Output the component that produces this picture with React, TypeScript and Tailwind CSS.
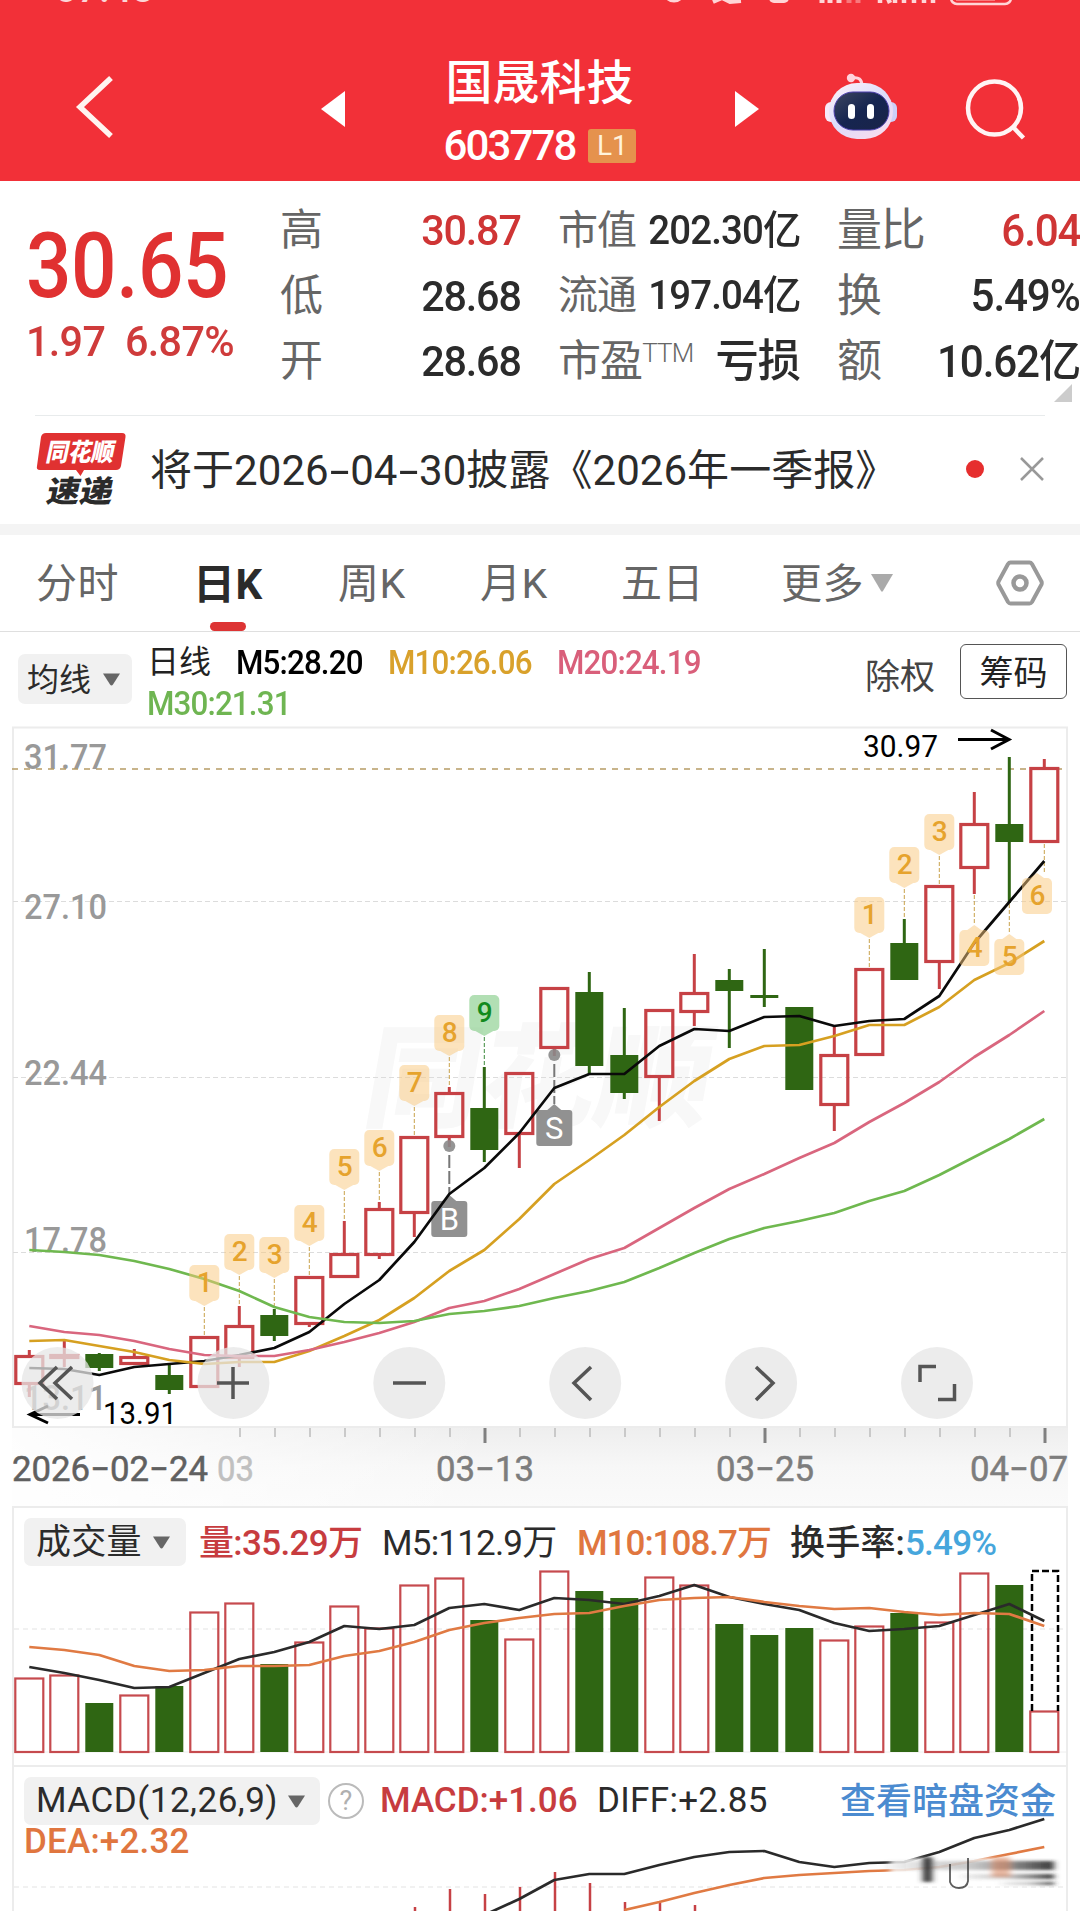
import React from "react";
import clsx from "clsx";

const FONT = "font-['Roboto','Noto_Sans_CJK_SC',sans-serif]";

// Horizontal position of the n-th trading day, shared by all three charts
const x = (i: number) => 29.3 + i * 35;

type Candle = { up: boolean; top: number; bottom: number; high: number; low: number };

const c = (up: boolean, top: number, bottom: number, high = top, low = bottom): Candle => ({
  up,
  top,
  bottom,
  high,
  low,
});

const candles: Candle[] = [
  c(true, 1355, 1385, 1350, 1397),
  c(true, 1354, 1359, 1340, 1367),
  c(false, 1354, 1368, 1353, 1371),
  c(true, 1356, 1365, 1349, 1365),
  c(false, 1375, 1390, 1364, 1394),
  c(true, 1336, 1388),
  c(true, 1325, 1359, 1306, 1367),
  c(false, 1315, 1336, 1309, 1341),
  c(true, 1276, 1325, 1276, 1327),
  c(true, 1253, 1278, 1221, 1278),
  c(true, 1208, 1256, 1202, 1259),
  c(true, 1136, 1214, 1136, 1237),
  c(true, 1092, 1138, 1087, 1147),
  c(false, 1108, 1150, 1067, 1162),
  c(true, 1072, 1135, 1072, 1168),
  c(true, 987, 1049, 987, 1056),
  c(false, 992, 1066, 972, 1074),
  c(false, 1055, 1093, 1008, 1099),
  c(true, 1009, 1078, 1009, 1121),
  c(true, 992, 1013, 954, 1026),
  c(false, 980, 991, 969, 1048),
  c(false, 995, 998, 949, 1007),
  c(false, 1007, 1090),
  c(true, 1054, 1106, 1026, 1131),
  c(true, 968, 1056),
  c(false, 943, 980, 919, 980),
  c(true, 885, 963, 885, 989),
  c(true, 823, 869, 792, 894),
  c(false, 824, 842, 757, 903),
  c(true, 767, 843, 759, 843),
];

const ma5 = [1368, 1369, 1375, 1367, 1364, 1361, 1355, 1348, 1332, 1304, 1280, 1242, 1194, 1168, 1133, 1088, 1074, 1074, 1046, 1029, 1031, 1017, 1016, 1026, 1021, 1019, 996, 943, 902, 861];
const ma10 = [1341, 1340, 1346, 1352, 1360, 1364, 1362, 1362, 1351, 1336, 1320, 1298, 1271, 1250, 1219, 1184, 1160, 1135, 1107, 1081, 1059, 1046, 1045, 1036, 1025, 1025, 1007, 980, 963, 941];
const ma20 = [1326, 1332, 1335, 1341, 1349, 1355, 1356, 1356, 1350, 1342, 1333, 1322, 1308, 1301, 1289, 1274, 1259, 1248, 1228, 1208, 1189, 1174, 1158, 1143, 1122, 1103, 1082, 1057, 1035, 1011];
const ma30 = [1250, 1252, 1255, 1261, 1269, 1279, 1291, 1307, 1317, 1322, 1323, 1321, 1314, 1311, 1306, 1298, 1291, 1282, 1268, 1253, 1239, 1228, 1221, 1213, 1201, 1191, 1175, 1157, 1139, 1119];

const volumes = [1678, 1675, 1703, 1695, 1686, 1612, 1603, 1664, 1642, 1606, 1628, 1585, 1578, 1620, 1639, 1571, 1591, 1598, 1577, 1585, 1624, 1635, 1628, 1640, 1626, 1613, 1622, 1573, 1585, 1711];
const vol5 = [1667, 1673, 1680, 1688, 1687, 1673, 1659, 1652, 1642, 1626, 1629, 1625, 1608, 1604, 1610, 1598, 1600, 1604, 1596, 1585, 1597, 1604, 1610, 1623, 1631, 1629, 1626, 1615, 1604, 1621];
const vol10 = [1647, 1650, 1655, 1666, 1671, 1670, 1666, 1666, 1665, 1656, 1651, 1642, 1630, 1623, 1618, 1614, 1613, 1606, 1600, 1598, 1597, 1602, 1606, 1609, 1608, 1612, 1615, 1613, 1614, 1626];

// MACD bars start on day 11, DIFF on day 13, DEA on day 17
const macdBars = [1907, 1889, 1894, 1887, 1872, 1883, 1902, 1903, 1905];
const diff = [1915, 1899, 1880, 1874, 1874, 1865, 1857, 1852, 1851, 1862, 1867, 1863, 1862, 1852, 1838, 1830, 1819];
const dea = [1910, 1902, 1893, 1885, 1878, 1875, 1873, 1871, 1870, 1867, 1861, 1854, 1847];

const line = (ys: number[], start = 0) => ys.map((y, i) => `${x(i + start)},${y}`).join(" ");

// [day, label, top of the bubble]
const countsAbove: [number, string, number][] = [
  [5, "1", 1265],
  [6, "2", 1234],
  [7, "3", 1237],
  [8, "4", 1205],
  [9, "5", 1149],
  [10, "6", 1130],
  [11, "7", 1065],
  [12, "8", 1015],
  [13, "9", 995],
  [24, "1", 897],
  [25, "2", 847],
  [26, "3", 814],
];

const Caret = ({ className }: { className?: string }) => (
  <svg viewBox="0 0 19 13" className={clsx("h-[13px] w-[19px] fill-[#666]", className)}>
    <path d="M1 0.5H18L11 11.500Q9.500 13.500 8 11.500Z" />
  </svg>
);

const StatusBar = () => (
  <div className="relative h-[6px] overflow-hidden">
    <span className="absolute -top-[30px] left-[55px] text-[39px] leading-none font-medium text-white/80">07:48</span>
    <svg viewBox="640 0 400 6" className="absolute top-0 left-[640px] h-[6px] w-[400px]" fill="none">
      <circle cx="674" cy="-9" r="10" stroke="#ffd5d6" strokeWidth="3" />
      <path d="M713 2L722 -2L730 2L741 1" stroke="#ffd5d6" strokeWidth="4" />
      <rect x="769" y="-10" width="20" height="13" rx="5" fill="#ffd5d6" />
      <path d="M822 -4V3M830 -4V3M839 -4V3" stroke="#ffd5d6" strokeWidth="5" />
      <path d="M849 -4V3M858 -4V3" stroke="#f8797d" strokeWidth="5" />
      <path d="M880 -4V3M887 -4L890 3M895 -4V3M904 -4V3M914 -4V3M924 -4V3M933 -4V3" stroke="#ffd5d6" strokeWidth="4.500" />
      <rect x="951" y="-16" width="60" height="20" rx="6" stroke="#ffd5d6" strokeWidth="2.500" />
      <path d="M956 -4H995V1H956Z" fill="#f8797d" />
    </svg>
  </div>
);

const Robot = () => (
  <svg viewBox="0 0 72 68" className="h-[68px] w-[72px]">
    <defs>
      <linearGradient id="shell" x1="0" y1="0" x2="0.700" y2="1">
        <stop offset="0" stopColor="#fff4f8" />
        <stop offset="0.550" stopColor="#dcdcfb" />
        <stop offset="1" stopColor="#f6dcf0" />
      </linearGradient>
      <linearGradient id="visor" x1="0" y1="0" x2="1" y2="1">
        <stop offset="0" stopColor="#3d4660" />
        <stop offset="0.500" stopColor="#162550" />
        <stop offset="1" stopColor="#1a2448" />
      </linearGradient>
    </defs>
    <path d="M27 5Q37 3 37 13" fill="none" stroke="#ffd3dc" strokeWidth="3" />
    <circle cx="26" cy="5" r="4.200" fill="#ffd3dc" />
    <rect x="0" y="29" width="12" height="20" rx="6" fill="#f7eafa" />
    <rect x="60" y="29" width="12" height="20" rx="6" fill="#cdd0f8" />
    <rect x="4" y="10" width="64" height="56" rx="28" fill="url(#shell)" />
    <rect x="9" y="19" width="55" height="38" rx="19" fill="url(#visor)" stroke="#4d3fae" strokeWidth="1" />
    <rect x="23" y="31" width="7" height="15" rx="3.500" fill="#fff" />
    <rect x="42" y="31" width="7" height="15" rx="3.500" fill="#fff" />
  </svg>
);

const Header = () => (
  <header className="h-[181px] bg-[#f23038] text-white">
    <StatusBar />
    <div className="flex h-[175px] items-start">
      <svg viewBox="0 0 40 66" className="mt-[68px] ml-[75px] h-[66px] w-[40px]">
        <path d="M36 4L5 33L36 62" fill="none" stroke="#fff4f0" strokeWidth="5.500" />
      </svg>
      <svg viewBox="0 0 24 36" className="mt-[85px] ml-[206px] h-[36px] w-[24px] fill-white">
        <path d="M24 0V36L0 18Z" />
      </svg>
      <div className="ml-[80px] flex w-[230px] flex-col items-center pt-[52px]">
        <div className="-ml-[1px] text-[47px] leading-[50px] font-medium">国晟科技</div>
        <div className="mt-[16px] flex items-center gap-[13px]">
          <span className="text-[42px] leading-[44px] font-medium tracking-[-1.900px]">603778</span>
          <span className="flex h-[34px] w-[48px] items-center justify-center rounded-[3px] bg-[#e5924d] text-[28px] leading-none text-[#fff3dc]">
            L1
          </span>
        </div>
      </div>
      <svg viewBox="0 0 24 36" className="mt-[85px] ml-[80px] h-[36px] w-[24px] fill-white">
        <path d="M0 0V36L24 18Z" />
      </svg>
      <div className="mt-[67px] ml-[66px]">
        <Robot />
      </div>
      <svg viewBox="0 0 62 62" className="mt-[72px] ml-[68px] h-[62px] w-[62px]" fill="none" stroke="#fff4f4" strokeWidth="4.500">
        <circle cx="29.500" cy="30" r="26.500" />
        <path d="M48 49L58.500 60" />
      </svg>
    </div>
  </header>
);

const Stat = ({ label, value, className }: { label: React.ReactNode; value: string; className?: string }) => (
  <div className="flex h-[65.500px] items-center justify-between">
    <span className="text-[#666]">{label}</span>
    <span className={clsx("origin-right scale-x-[0.960] font-medium", className ?? "text-[#2b2b2b]")}>{value}</span>
  </div>
);

const Quote = () => (
  <section className="relative flex h-[234px] pt-[17px] leading-none">
    <div className="w-[252px] pl-[26px] text-[#e03131]">
      <div className="origin-left scale-x-[0.880] pt-[23px] text-[91px] font-medium tracking-[-0.500px]">30.65</div>
      <div className="mt-[8px] flex gap-[24px] text-[43px] font-medium tracking-[-0.700px] text-[#cf3b3b]">
        <span className="w-[75px] origin-left scale-x-[0.960]">1.97</span>
        <span className="origin-left scale-x-[0.960]">6.87%</span>
      </div>
    </div>
    <div className="ml-[28px] w-[241px] text-[43px] tracking-[-1.200px]">
      <Stat label="高" value="30.87" className="text-[#cf3535]" />
      <Stat label="低" value="28.68" />
      <Stat label="开" value="28.68" />
    </div>
    <div className="ml-[37px] w-[242px] text-[40px] tracking-[-0.900px]">
      <Stat label="市值" value="202.30亿" />
      <Stat label="流通" value="197.04亿" />
      <Stat
        label={
          <span className="flex text-[43px]">
            市盈<span className="text-[26px] font-light tracking-[-0.900px]">TTM</span>
          </span>
        }
        value="亏损"
        className="text-[45px] text-[#2b2b2b]"
      />
    </div>
    <div className="ml-[37px] w-[243px] text-[45px] tracking-[-1.200px]">
      <Stat label="量比" value="6.04" className="text-[44px] text-[#cf3535]" />
      <Stat label="换" value="5.49%" className="text-[44px] text-[#2b2b2b]" />
      <Stat label="额" value="10.62亿" className="text-[44px] text-[#2b2b2b]" />
    </div>
    <svg viewBox="0 0 18 18" className="absolute top-[203px] left-[1054px] h-[18px] w-[18px] fill-[#ccc]">
      <path d="M18 0V18H0Z" />
    </svg>
  </section>
);

// The date separators are drawn wider than the font's own hyphen
const WideHyphen = () => <span className="inline-block w-[21.500px] scale-x-[1.700] text-center">-</span>;

const News = () => (
  <section className="mx-[35px] flex h-[109px] w-[1010px] items-start border-t border-[#e8ebec]">
    <svg viewBox="35 431 92 76" className="mt-[15px] h-[76px] w-[92px] overflow-visible">
      <path d="M46 433H122Q126 433 125.500 437L121 466Q120 470 116 470H84L80.500 476L76 470H40Q36 470 37 466L41 437Q42 433 46 433Z" fill="#e03131" />
      <text x="46" y="461" transform="translate(97 0) skewX(-12)" className="font-['Noto_Sans_CJK_SC',sans-serif] text-[25px] font-black" fill="#fff" textLength="68" lengthAdjust="spacingAndGlyphs">
        同花顺
      </text>
      <text x="46" y="502" transform="translate(106 0) skewX(-12)" className="font-['Noto_Sans_CJK_SC',sans-serif] text-[30px] font-black" fill="#2b2b2b" textLength="66" lengthAdjust="spacingAndGlyphs">
        速递
      </text>
    </svg>
    <p className="mt-[34px] ml-[23px] w-[759px] text-[42px] leading-[42px] tracking-[0.050px] whitespace-nowrap text-[#2b2b2b]">
      将于2026
      <WideHyphen />
      04
      <WideHyphen />
      30披露《2026年一季报》
    </p>
    <span className="mt-[44px] ml-[57px] size-[18px] rounded-full bg-[#e62e2e]" />
    <svg viewBox="0 0 24 24" className="mt-[41px] ml-[36px] size-[24px]" fill="none" stroke="#999" strokeWidth="2.500">
      <path d="M1 1L23 23M23 1L1 23" />
    </svg>
  </section>
);

const tabs = [
  { name: "分时", width: "w-[161px]" },
  { name: "日K", width: "w-[141px]" },
  { name: "周K", width: "w-[142px]" },
  { name: "月K", width: "w-[141px]" },
  { name: "五日", width: "w-[160px]" },
  { name: "更多", width: "w-[90px]" },
];

const Tabs = () => (
  <nav className="flex h-[97px] items-center border-b border-[#dfdfdf] pl-[36px] text-[41px] leading-none text-[#666]">
    {tabs.map((tab) => (
      <div key={tab.name} className={clsx("relative flex h-full items-center pt-[3px]", tab.width)}>
        {tab.name === "日K" ? (
          <>
            <span className="-ml-[4px] text-[42px] font-bold tracking-[0.500px] text-[#2b2b2b]">{tab.name}</span>
            <span className="absolute bottom-0 left-[13px] h-[9px] w-[36px] rounded-full bg-[#dd3434]" />
          </>
        ) : (
          <span className="tracking-[0.500px]">{tab.name}</span>
        )}
      </div>
    ))}
    <svg viewBox="0 0 22 18" className="h-[18px] w-[22px] fill-[#aaa]">
      <path d="M0 0H22L12 17Q11 18.500 10 17Z" />
    </svg>
    <svg viewBox="0 0 48 48" className="ml-[103px] size-[48px]" fill="none" stroke="#999">
      <path d="M14.500 3.500H33.500Q35 3.500 36 5L45.500 22.500Q46 24 45.500 25.500L36 43Q35 44.500 33.500 44.500H14.500Q13 44.500 12 43L2.500 25.500Q2 24 2.500 22.500L12 5Q13 3.500 14.500 3.500Z" strokeWidth="4" />
      <circle cx="24" cy="24" r="6.500" strokeWidth="4.500" />
    </svg>
  </nav>
);

const Averages = () => (
  <section className="flex h-[94px] items-start pl-[18px] leading-none">
    <button className="mt-[22px] flex h-[50px] w-[114px] items-center gap-[11px] rounded-[7px] bg-[#f1f1f1] pl-[9px] text-[32px] text-[#2b2b2b]">
      <span className="pt-[2px]">均线</span>
      <Caret />
    </button>
    <div className="mt-[13px] ml-[15px] w-[717px] text-[33px] tracking-[-0.900px]">
      <div className="flex h-[34px] items-center font-medium">
        <span className="w-[89px] text-[32px] font-normal tracking-normal text-[#222]">日线</span>
        <span className="w-[152px] origin-left scale-x-[0.950] text-black">M5:28.20</span>
        <span className="w-[169px] origin-left scale-x-[0.950] text-[#d9a12b]">M10:26.06</span>
        <span className="origin-left scale-x-[0.950] text-[#d95f7a]">M20:24.19</span>
      </div>
      <div className="mt-[8px] h-[34px] origin-left scale-x-[0.950] leading-[34px] font-medium text-[#6fb552]">M30:21.31</div>
    </div>
    <span className="mt-[28px] ml-[1px] text-[35px] text-[#444]">除权</span>
    <button className="mt-[12px] ml-[25px] h-[55px] w-[107px] rounded-[6px] border border-[#555] pt-[3px] text-[34px] text-[#222]">筹码</button>
  </section>
);

const Bubble = ({ cx, top, label, below }: { cx: number; top: number; label: string; below?: boolean }) => {
  const green = label === "9";
  return (
    <g>
      <rect x={cx - 15} y={top} width="30" height="36" rx="5" fill={green ? "#7fca82" : "#fac77c"} fillOpacity={green ? 0.6 : 0.5} />
      <path
        d={below ? `M${cx - 7} ${top}L${cx} ${top - 5}L${cx + 7} ${top}Z` : `M${cx - 9} ${top + 36}L${cx} ${top + 41}L${cx + 9} ${top + 36}Z`}
        fill={green ? "#7fca82" : "#fac77c"}
        fillOpacity={green ? 0.6 : 0.5}
      />
      <text x={cx + 0.5} y={top + (below ? 27 : 26.5)} textAnchor="middle" className="text-[28px] font-medium" fill={green ? "#128a1d" : "#e6a32d"}>
        {label}
      </text>
    </g>
  );
};

const TradeMark = ({ day, dot, top, label }: { day: number; dot: number; top: number; label: string }) => (
  <g>
    <circle cx={x(day)} cy={dot} r="6" fill="#8a8a8a" fillOpacity="0.9" />
    <path d={`M${x(day)} ${dot + 9}V${top - 6}`} stroke="#777" strokeWidth="2" strokeDasharray="13 3" />
    <rect x={x(day) - 18} y={top} width="36" height="36" rx="3" fill="#919191" />
    <path d={`M${x(day) - 7} ${top}L${x(day)} ${top - 6}L${x(day) + 7} ${top}Z`} fill="#919191" />
    <text x={x(day)} y={top + 29} textAnchor="middle" className="text-[31px]" fill="#fff">
      {label}
    </text>
  </g>
);

const CandleShape = ({ candle, cx }: { candle: Candle; cx: number }) => {
  const { up, top, bottom, high, low } = candle;
  const color = up ? "#c64145" : "#2f6613";
  return (
    <g>
      <path d={`M${cx} ${high}V${top}M${cx} ${bottom}V${low}`} stroke={color} strokeWidth="3" />
      {up ? (
        <rect x={cx - 13.5} y={top + 1.5} width="27" height={Math.max(bottom - top - 3, 1)} fill="none" stroke={color} strokeWidth="3.200" />
      ) : (
        <rect x={cx - 14} y={top} width="28" height={bottom - top} fill={color} />
      )}
    </g>
  );
};

const priceLabels = [
  { value: "31.77", y: 769 },
  { value: "27.10", y: 919 },
  { value: "22.44", y: 1085 },
  { value: "17.78", y: 1252 },
  { value: "13.11", y: 1410 },
];

const controls = [
  "M57 1367L40 1383L57 1399M72 1367L55 1383L72 1399",
  "M217 1383H249M233 1367V1399",
  "M393 1383H426",
  "M591 1367L574 1383L591 1400",
  "M756 1367L773 1383L756 1400",
  "M920 1382V1366.500H936M938 1399.500H954.500V1384",
];

const PriceChart = () => (
  <svg viewBox="0 726 1080 780" className="block h-[780px] w-[1080px]">
    <defs>
      <linearGradient id="axisFade" x1="0" y1="0" x2="0" y2="1">
        <stop offset="0" stopColor="#eeeeee" />
        <stop offset="0.500" stopColor="#f7f7f7" />
        <stop offset="1" stopColor="#fafafa" />
      </linearGradient>
      <linearGradient id="leftFade">
        <stop offset="0" stopColor="#fff" stopOpacity="0.900" />
        <stop offset="0.450" stopColor="#fff" stopOpacity="0" />
      </linearGradient>
    </defs>
    <rect x="12" y="1428" width="1056" height="78" fill="url(#axisFade)" />
    <rect x="12" y="1428" width="1056" height="78" fill="url(#leftFade)" />
    <rect x="13" y="727.500" width="1054" height="699.500" fill="none" stroke="#ececec" strokeWidth="2" />

    <g transform="translate(0 1118) skewX(-10)">
      <text x="360" y="0" className="text-[112px] font-black" fill="#f8f8f8" textLength="346" lengthAdjust="spacingAndGlyphs">
        同花顺
      </text>
    </g>

    {[901, 1077, 1252].map((y) => (
      <path key={y} d={`M13 ${y}.5H1066`} stroke="#dcdcdc" strokeDasharray="5 3" />
    ))}
    {priceLabels.map((label) => (
      <text key={label.value} x="24" y={label.y} className="text-[34.500px] font-medium" fill="#999" textLength="83" lengthAdjust="spacingAndGlyphs">
        {label.value}
      </text>
    ))}
    <path d="M12 769H1062" stroke="#b79c66" strokeWidth="1.500" strokeDasharray="6 6" />

    {candles.map((candle, i) => (
      <CandleShape key={i} candle={candle} cx={x(i)} />
    ))}

    {/* leaders between the bubbles and their candles */}
    {countsAbove.map(([day, label, top]) => (
      <path key={day} d={`M${x(day)} ${top + 42}V${candles[day].high}`} stroke={label === "9" ? "#3c8a3c" : "#c9a24a"} strokeDasharray="4 2" />
    ))}
    <path d={`M${x(27)} 895V925M${x(28)} 904V934M${x(29)} 844V874`} stroke="#c9a24a" strokeDasharray="4 2" />

    <TradeMark day={12} dot={1146} top={1201} label="B" />
    <TradeMark day={15} dot={1055} top={1110} label="S" />

    <g fill="none" strokeWidth="2.700" strokeLinejoin="round">
      <polyline points={line(ma5)} stroke="#0a0a0a" />
      <polyline points={line(ma10)} stroke="#d6a021" />
      <polyline points={line(ma20)} stroke="#d9667e" />
      <polyline points={line(ma30)} stroke="#6fb84f" />
    </g>

    {countsAbove.map(([day, label, top]) => (
      <Bubble key={day} cx={x(day)} top={top} label={label} />
    ))}
    <Bubble cx={x(27)} top={930} label="4" below />
    <Bubble cx={x(28)} top={939} label="5" below />
    <Bubble cx={1037} top={878} label="6" below />

    <text x="863" y="757" className="text-[32px]" textLength="75" lengthAdjust="spacingAndGlyphs">
      30.97
    </text>
    <path d="M958 739.500H1009M991 730L1009 739.500L991 749" fill="none" stroke="#000" strokeWidth="3" />
    <text x="103" y="1424" className="text-[31px]" textLength="74" lengthAdjust="spacingAndGlyphs">
      13.91
    </text>
    <path d="M80 1414.500H30M48 1406L30 1414.500L48 1423" fill="none" stroke="#000" strokeWidth="3" />

    {controls.map((d, i) => (
      <g key={d}>
        <circle cx={57.5 + i * 175.9} cy="1383" r="36" fill="#e6e6e6" fillOpacity="0.750" />
        <path d={d} fill="none" stroke="#555" strokeWidth="3.500" />
      </g>
    ))}

    {candles.map((_, i) =>
      i < 6 ? null : [13, 21, 29].includes(i) ? (
        <path key={i} d={`M${x(i) + 0.7} 1428V1443`} stroke="#808080" strokeWidth="3" />
      ) : (
        <path key={i} d={`M${x(i) + 0.7} 1428V1437`} stroke="#bcbcbc" strokeWidth="1.500" />
      ),
    )}
    <g className="text-[35px]" fill="#7d7d7d" stroke="#7d7d7d" strokeWidth="0.500">
      <text x="217" y="1481" fill="#c0c0c0" stroke="#c0c0c0" textLength="37" lengthAdjust="spacingAndGlyphs">
        03
      </text>
      <text x="12" y="1481" fill="#606060" stroke="#606060" textLength="196" lengthAdjust="spacingAndGlyphs">
        2026−02−24
      </text>
      <text x="436" y="1481" textLength="98" lengthAdjust="spacingAndGlyphs">
        03−13
      </text>
      <text x="716" y="1481" textLength="98" lengthAdjust="spacingAndGlyphs">
        03−25
      </text>
      <text x="970" y="1481" textLength="98" lengthAdjust="spacingAndGlyphs">
        04−07
      </text>
    </g>
  </svg>
);

const VolumePanel = () => (
  <section className="mx-[12px] h-[259px] w-[1056px] border-2 border-b-0 border-[#ececec]">
    <div className="flex h-[59px] items-start pt-[10px] pl-[10px] text-[35px] leading-[52px] font-medium tracking-[-0.800px] whitespace-nowrap">
      <button className="flex h-[48px] w-[162px] items-center gap-[10px] rounded-[7px] bg-[#f1f1f1] pl-[12px] font-normal tracking-[0.300px] text-[#2b2b2b]">
        <span className="pt-[2px]">成交量</span>
        <Caret />
      </button>
      <span className="ml-[13px] w-[183px] tracking-[-0.650px] text-[#c73c3f]">量:35.29万</span>
      <span className="w-[195px] font-normal text-[#2b2b2b]">M5:112.9万</span>
      <span className="w-[213px] tracking-[-1.000px] text-[#e0763f]">M10:108.7万</span>
      <span className="tracking-[0.200px] text-[#2b2b2b]">换手率:</span>
      <span className="text-[#46a6dc]">5.49%</span>
    </div>
    <svg viewBox="14 1567 1052 196" className="block h-[196px] w-[1052px]">
      <path d="M14 1629H1066" stroke="#e3e3e3" strokeDasharray="5 4" />
      <path d="M14 1752H1066" stroke="#eee" />
      {volumes.map((top, i) =>
        candles[i].up ? (
          <rect key={i} x={x(i) - 14} y={top + 0.5} width="28" height={1751.5 - top} fill="none" stroke="#c64a4e" strokeWidth="2.200" />
        ) : (
          <rect key={i} x={x(i) - 14} y={top} width="28" height={1752 - top} fill="#2f6613" />
        ),
      )}
      <path d="M1032 1711V1571H1058V1711" fill="none" stroke="#000" strokeWidth="2.500" strokeDasharray="7 3" />
      <g fill="none" strokeWidth="2.700" strokeLinejoin="round">
        <polyline points={line(vol5)} stroke="#2a2a2a" />
        <polyline points={line(vol10)} stroke="#e07a43" />
      </g>
    </svg>
  </section>
);

const MacdPanel = () => (
  <section className="relative mx-[12px] h-[146px] w-[1056px] overflow-hidden border-2 border-b-0 border-[#ececec]">
    <svg viewBox="14 1767 1052 144" className="absolute top-0 left-0 h-[144px] w-[1052px]">
      <defs>
        <filter id="smear" x="-20%" y="-50%" width="140%" height="200%">
          <feGaussianBlur stdDeviation="3 1.500" />
        </filter>
        <linearGradient id="smearFade">
          <stop offset="0" stopColor="#333" stopOpacity="0.050" />
          <stop offset="0.500" stopColor="#666" stopOpacity="0.350" />
          <stop offset="1" stopColor="#222" stopOpacity="0.900" />
        </linearGradient>
      </defs>
      <path d="M14 1887H1066" stroke="#e3e3e3" strokeDasharray="5 4" />
      {macdBars.map((top, i) => (
        <path key={i} d={`M${x(i + 11) + 0.7} ${top}V1911`} stroke="#c64145" strokeWidth="2.500" />
      ))}
      <g fill="none" strokeWidth="2.700" strokeLinejoin="round">
        <polyline points={line(diff, 13)} stroke="#2a2a2a" />
        <polyline points={line(dea, 17)} stroke="#e07a43" />
      </g>
      <rect x="890" y="1858" width="166" height="28" fill="#fff" fillOpacity="0.850" filter="url(#smear)" />
      <g filter="url(#smear)">
        <rect x="886" y="1861" width="168" height="9" fill="url(#smearFade)" />
        <rect x="960" y="1874" width="94" height="5" fill="url(#smearFade)" />
        <rect x="1000" y="1882" width="54" height="3" fill="url(#smearFade)" />
        <rect x="923" y="1857" width="9" height="25" fill="#333" />
        <rect x="992" y="1857" width="18" height="20" fill="#d9835d" fillOpacity="0.550" />
      </g>
      <path d="M950 1864V1882Q952 1888 959 1888Q967 1888 968 1881V1858" fill="none" stroke="#333" strokeOpacity="0.800" strokeWidth="1.800" />
    </svg>
    <div className="relative pt-[10px] pl-[10px] text-[35px] font-medium whitespace-nowrap">
      <div className="flex h-[48px] items-center leading-[48px]">
        <button className="flex h-[48px] w-[296px] items-center gap-[10px] rounded-[7px] bg-[#f1f1f1] pl-[12px] font-normal text-[#2b2b2b]">
          <span className="w-[241px] tracking-[0.500px]">MACD(12,26,9)</span>
          <Caret />
        </button>
        <span className="ml-[8px] flex size-[36px] items-center justify-center rounded-full border-[2.500px] border-[#bbb] text-[27px] leading-none font-normal text-[#b0b0b0]">
          ?
        </span>
        <span className="ml-[16px] w-[217px] text-[#c73c3f]">MACD:+1.06</span>
        <span className="w-[243px] font-normal tracking-[0.300px] text-[#2b2b2b]">DIFF:+2.85</span>
        <a className="pt-[2px] text-[36px] text-[#4b8bd0]">查看暗盘资金</a>
      </div>
      <div className="-mt-[1px] leading-[36px] tracking-[0.200px] text-[#e0763f]">DEA:+2.32</div>
    </div>
  </section>
);

export default function App() {
  return (
    <main className={clsx("h-[1911px] w-[1080px] overflow-hidden bg-white", FONT)}>
      <Header />
      <Quote />
      <News />
      <div className="h-[11px] bg-[#f4f4f4]" />
      <Tabs />
      <Averages />
      <PriceChart />
      <VolumePanel />
      <MacdPanel />
    </main>
  );
}
